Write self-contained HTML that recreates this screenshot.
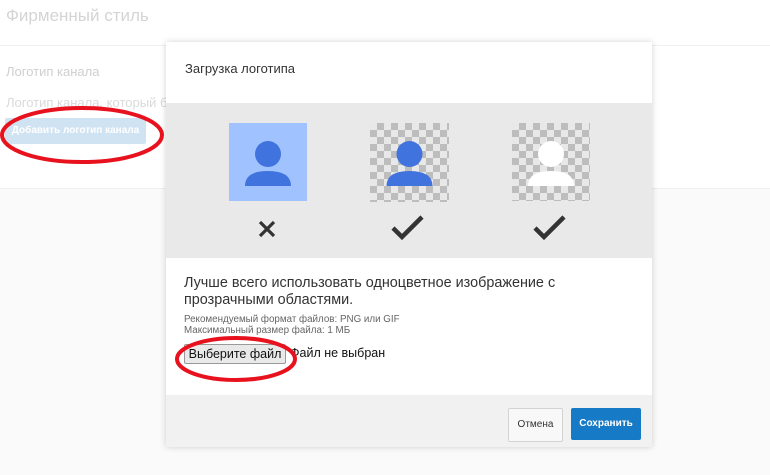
<!DOCTYPE html>
<html><head><meta charset="utf-8"><style>
*{margin:0;padding:0;box-sizing:border-box}
body{width:770px;height:475px;overflow:hidden;background:#fafafa;font-family:"Liberation Sans",Arial,sans-serif;position:relative}
.abs{position:absolute}
.chk{background-color:#e8e8e8;background-image:linear-gradient(45deg,#bdbdbd 25%,transparent 25%,transparent 75%,#bdbdbd 75%),linear-gradient(45deg,#bdbdbd 25%,transparent 25%,transparent 75%,#bdbdbd 75%);background-size:14px 14px;background-position:0 0,7px 7px}
</style></head><body>
<div class="abs" style="left:0;top:0;width:770px;height:45px;background:#fff"></div>
<div class="abs" style="left:6px;top:6px;font-size:17px;color:#d4d4d4">Фирменный стиль</div>
<div class="abs" style="left:0;top:45px;width:770px;height:144px;background:#fff;border-top:1px solid #f0f0f0;border-bottom:1px solid #eee"></div>
<div class="abs" style="left:6px;top:64px;font-size:13px;color:#cfcfcf">Логотип канала</div>
<div class="abs" style="left:6px;top:95px;font-size:13px;color:#dadada;white-space:nowrap">Логотип канала, который буд</div>
<div class="abs" style="left:5px;top:118px;width:141px;height:26px;background:#d0e3f3;border-radius:2px;color:#fff;font-size:10px;font-weight:bold;line-height:26px;text-align:center;white-space:nowrap">Добавить логотип канала</div>

<div class="abs" style="left:166px;top:42px;width:486px;height:405px;background:#fff;box-shadow:0 0 6px rgba(0,0,0,.18)">
 <div class="abs" style="left:19px;top:19px;font-size:13px;color:#333">Загрузка логотипа</div>
 <div class="abs" style="left:0;top:61px;width:486px;height:155px;background:#e9e9e9"></div>
 <div class="abs" style="left:63px;top:81px;width:78px;height:78px;background:#a0c3ff">
  <svg width="78" height="78" viewBox="0 0 78 78"><circle cx="39" cy="31" r="13" fill="#4173df"/><path d="M16 63 Q16 48 39 48 Q62 48 62 63Z" fill="#4173df"/></svg></div>
 <div class="abs chk" style="left:204px;top:81px;width:79px;height:79px">
  <svg width="79" height="78" viewBox="0 0 78 78"><circle cx="39" cy="31" r="13" fill="#4173df"/><path d="M16 63 Q16 48 39 48 Q62 48 62 63Z" fill="#4173df"/></svg></div>
 <div class="abs chk" style="left:346px;top:81px;width:78px;height:78px">
  <svg width="78" height="78" viewBox="0 0 78 78"><circle cx="39" cy="31" r="13" fill="#fff"/><path d="M16 63 Q16 48 39 48 Q62 48 62 63Z" fill="#fff"/></svg></div>
 <svg class="abs" style="left:91px;top:177px" width="20" height="20" viewBox="0 0 20 20"><path d="M3 3L17 17M17 3L3 17" stroke="#333" stroke-width="3.2"/></svg>
 <svg class="abs" style="left:224px;top:172px" width="36" height="28" viewBox="0 0 36 28"><path d="M3 14L12 23L32 3" stroke="#333" stroke-width="4.5" fill="none"/></svg>
 <svg class="abs" style="left:366px;top:172px" width="36" height="28" viewBox="0 0 36 28"><path d="M3 14L12 23L32 3" stroke="#333" stroke-width="4.5" fill="none"/></svg>
 <div class="abs" style="left:18px;top:233px;width:460px;font-size:14.4px;line-height:17px;color:#333">Лучше всего использовать одноцветное изображение с прозрачными областями.</div>
 <div class="abs" style="left:18px;top:272px;font-size:9.8px;line-height:11px;color:#666">Рекомендуемый формат файлов: PNG или GIF<br>Максимальный размер файла: 1 МБ</div>
 <div class="abs" style="left:18px;top:302px;width:102px;height:20px;background:#e9e9e9;border:1px solid #999;border-radius:2px;font-size:12.5px;line-height:18px;text-align:center;color:#111">Выберите файл</div>
 <div class="abs" style="left:124px;top:304px;font-size:12.5px;color:#111">Файл не выбран</div>
 <div class="abs" style="left:0;top:353px;width:486px;height:52px;background:#f1f1f1"></div>
 <div class="abs" style="left:342px;top:366px;width:55px;height:34px;background:#f8f8f8;border:1px solid #d3d3d3;border-radius:2px;font-size:10px;line-height:32px;text-align:center;color:#333">Отмена</div>
 <div class="abs" style="left:405px;top:366px;width:70px;height:32px;background:#167ac6;border-radius:2px;font-size:10px;font-weight:bold;line-height:32px;text-align:center;color:#fff">Сохранить</div>
</div>
<svg class="abs" style="left:0;top:0" width="770" height="475">
 <ellipse cx="82" cy="135" rx="80" ry="27" fill="none" stroke="#e8121e" stroke-width="4"/>
 <ellipse cx="236" cy="359" rx="59" ry="21" fill="none" stroke="#e8121e" stroke-width="4"/>
</svg>
</body></html>
